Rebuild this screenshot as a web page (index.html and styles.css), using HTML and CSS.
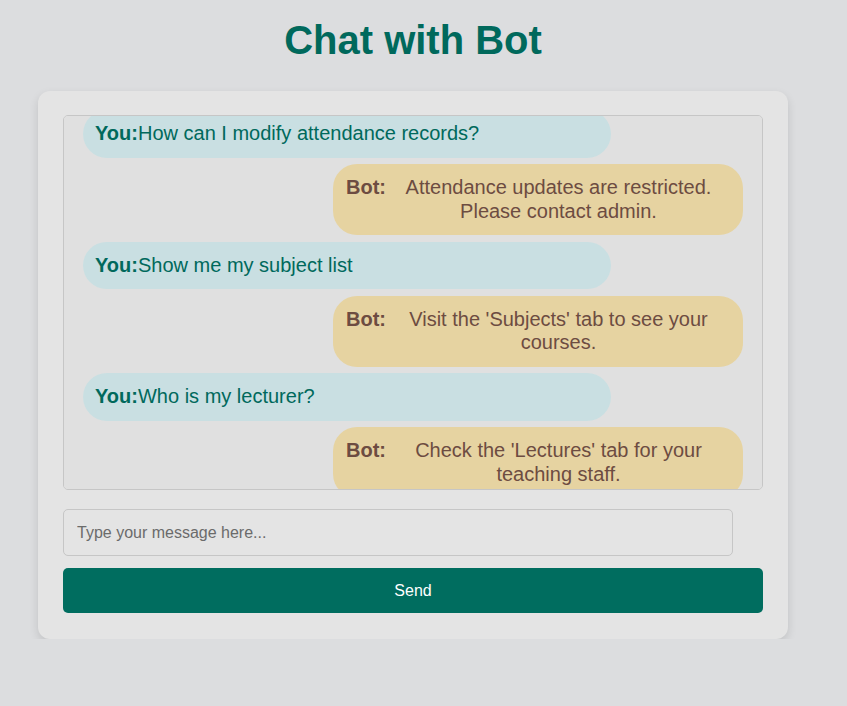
FILE: index.html
```html
<!DOCTYPE html>
<html>
<head>
<meta charset="utf-8">
<link rel="stylesheet" href="styles.css">
</head>
<body>
<div class="page">
  <h1 class="title">Chat with Bot</h1>
  <div class="card">
    <div class="chat-box" id="chat">
      <div class="msg user"><b>You:</b>How can I modify attendance records?</div>
      <div class="msg bot"><b>Bot:</b><span>Attendance updates are restricted. Please contact admin.</span></div>
      <div class="msg user"><b>You:</b>Show me my subject list</div>
      <div class="msg bot"><b>Bot:</b><span>Visit the 'Subjects' tab to see your courses.</span></div>
      <div class="msg user"><b>You:</b>Who is my lecturer?</div>
      <div class="msg bot"><b>Bot:</b><span>Check the 'Lectures' tab for your teaching staff.</span></div>
    </div>
    <input class="input" type="text" placeholder="Type your message here...">
    <button class="send">Send</button>
  </div>
</div>
<script src="script.js"></script>
</body>
</html>
```
FILE: styles.css
```css
html, body {
  margin: 0;
  padding: 0;
  background: #dcdddf;
  font-family: "Liberation Sans", Arial, sans-serif;
}
.page {
  width: 750px;
  margin-left: 38px;
  padding-top: 17px;
}
.title {
  margin: 0 0 28px;
  text-align: center;
  font-size: 40px;
  line-height: 46px;
  font-weight: bold;
  color: #00695c;
}
.card {
  background: #e4e4e4;
  border-radius: 12px;
  box-shadow: 0 4px 10px rgba(0, 0, 0, 0.12);
  padding: 24px 25px 26px;
  display: flex;
  flex-direction: column;
}
.chat-box {
  height: 375px;
  box-sizing: border-box;
  border: 1px solid #c6c6c6;
  border-radius: 5px;
  background: #e0e0e0;
  padding: 19px;
  overflow-y: auto;
  scrollbar-width: none;
  display: flex;
  flex-direction: column;
  gap: 6.5px;
}
.chat-box::-webkit-scrollbar { display: none; }
.msg {
  flex: none;
  font-size: 20px;
  line-height: 23.5px;
  padding: 12px;
  border-radius: 24px;
}
.msg.user {
  width: 80%;
  box-sizing: border-box;
  background: #c9dfe2;
  color: #00695c;
}
.msg.bot {
  width: 410px;
  box-sizing: border-box;
  align-self: flex-end;
  background: #e6d3a1;
  color: #6d4c41;
  display: flex;
  padding-left: 13px;
}
.msg.bot b {
  flex: none;
}
.msg.bot span {
  flex: 1;
  text-align: center;
}
.input {
  margin-top: 19px;
  width: 670px;
  height: 47px;
  box-sizing: border-box;
  border: 1px solid #c6c6c6;
  border-radius: 5px;
  background: #e4e4e4;
  padding: 0 13px;
  font-family: "Liberation Sans", Arial, sans-serif;
  font-size: 16px;
  color: #333;
  outline: none;
}
.input::placeholder {
  color: #6b6b6b;
}
.send {
  margin-top: 12px;
  height: 45px;
  border: none;
  border-radius: 5px;
  background: #006d5f;
  color: #fff;
  font-family: "Liberation Sans", Arial, sans-serif;
  font-size: 16px;
}
```
FILE: script.js
```js
document.getElementById('chat').scrollTop = 25;
```
